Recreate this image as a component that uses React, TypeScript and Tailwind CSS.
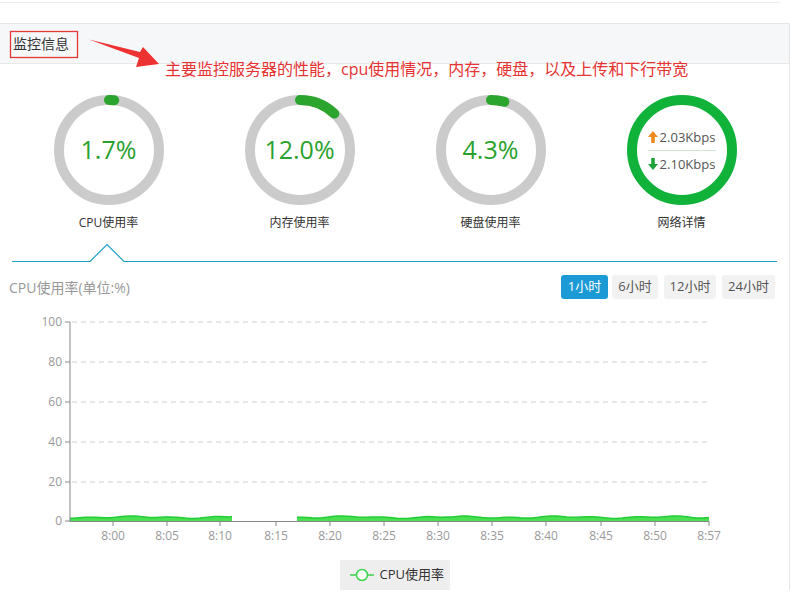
import React from "react";

const FONT = "'Open Sans','Noto Sans CJK SC',sans-serif";

function Gauge({ pct, label }: { pct: number; label: string }) {
  const c = 2 * Math.PI * 50;
  const len = (pct / 100) * c;
  return (
    <div className="flex flex-col items-center">
      <div className="relative w-[110px] h-[110px]">
        <svg width="110" height="110" viewBox="0 0 110 110">
          <circle cx="55" cy="55" r="50" fill="none" stroke="#cbcbcb" strokeWidth="10" />
          <circle
            cx="55"
            cy="55"
            r="50"
            fill="none"
            stroke="#2ba52e"
            strokeWidth="10"
            strokeLinecap="round"
            strokeDasharray={`${len} ${c}`}
            transform="rotate(-90 55 55)"
          />
        </svg>
        <div className="absolute inset-0 flex items-center justify-center text-[25px] text-[#2aa12f]">
          {pct.toFixed(1)}%
        </div>
      </div>
      <div className="mt-[10px] text-[12px] leading-[16px] text-[#333]">{label}</div>
    </div>
  );
}

function NetGauge() {
  return (
    <div className="flex flex-col items-center">
      <div className="relative w-[110px] h-[110px]">
        <svg width="110" height="110" viewBox="0 0 110 110">
          <circle cx="55" cy="55" r="50" fill="none" stroke="#10b23a" strokeWidth="10" />
        </svg>
        <div className="absolute inset-0 flex flex-col items-center justify-center text-[13px] text-[#555]">
          <div className="flex items-center gap-[2px] leading-[18px]">
            <svg width="10" height="12" viewBox="0 0 10 12">
              <path d="M5 0 L10 6 L6.8 6 L6.8 12 L3.2 12 L3.2 6 L0 6 Z" fill="#f08a1c" />
            </svg>
            <span>2.03Kbps</span>
          </div>
          <div className="w-[68px] h-px bg-[#cfe6d4] my-[4px]" />
          <div className="flex items-center gap-[2px] leading-[18px]">
            <svg width="10" height="12" viewBox="0 0 10 12">
              <path d="M5 12 L10 6 L6.8 6 L6.8 0 L3.2 0 L3.2 6 L0 6 Z" fill="#1ea23a" />
            </svg>
            <span>2.10Kbps</span>
          </div>
        </div>
      </div>
      <div className="mt-[10px] text-[12px] leading-[16px] text-[#333]">网络详情</div>
    </div>
  );
}

const yTicks = [
  { v: 100, y: 322 },
  { v: 80, y: 362 },
  { v: 60, y: 402 },
  { v: 40, y: 442 },
  { v: 20, y: 482 },
  { v: 0, y: 521 },
];

const xTicks = [
  { t: "8:00", x: 113 },
  { t: "8:05", x: 167 },
  { t: "8:10", x: 220 },
  { t: "8:15", x: 276 },
  { t: "8:20", x: 330 },
  { t: "8:25", x: 384 },
  { t: "8:30", x: 438 },
  { t: "8:35", x: 492 },
  { t: "8:40", x: 546 },
  { t: "8:45", x: 601 },
  { t: "8:50", x: 655 },
  { t: "8:57", x: 709 },
];

function areaPath(x0: number, x1: number) {
  const pts: string[] = [];
  for (let x = x0; x <= x1; x += 5) {
    const v = 1.9 + 0.35 * Math.sin(x / 17) + 0.3 * Math.sin(x / 6.7 + 1);
    pts.push(`${x},${(521 - v * 2).toFixed(1)}`);
  }
  pts.push(`${x1},${(521 - (1.9 + 0.35 * Math.sin(x1 / 17)) * 2).toFixed(1)}`);
  return { line: "M" + pts.join(" L"), area: `M${x0},521 L` + pts.join(" L") + ` L${x1},521 Z` };
}

function Chart() {
  const a = areaPath(70, 232);
  const b = areaPath(297, 709);
  return (
    <svg width="790" height="245" viewBox="0 305 790 245" style={{ fontFamily: FONT }}>
      {yTicks.map((t) => (
        <g key={t.v}>
          {t.v !== 0 && (
            <line x1="72" x2="707" y1={t.y} y2={t.y} stroke="#cfcfcf" strokeDasharray="5 4" />
          )}
          <line x1="65" x2="70" y1={t.y} y2={t.y} stroke="#888" />
          <text x="62" y={t.y + 4} textAnchor="end" fontSize="12" fill="#999">
            {t.v}
          </text>
        </g>
      ))}
      {[a, b].map((p, i) => (
        <g key={i}>
          <path d={p.area} fill="#4ae052" />
          <path d={p.line} fill="none" stroke="#22cc34" strokeWidth="1.5" />
        </g>
      ))}
      <line x1="70" x2="70" y1="322" y2="521.5" stroke="#888" />
      <line x1="70" x2="709" y1="521.5" y2="521.5" stroke="#888" />
      {xTicks.map((t) => (
        <g key={t.t}>
          <line x1={t.x} x2={t.x} y1="521" y2="526" stroke="#888" />
          <text x={t.x} y="540" textAnchor="middle" fontSize="12" fill="#999">
            {t.t}
          </text>
        </g>
      ))}
    </svg>
  );
}

export default function App() {
  return (
    <div className="relative w-[793px] h-[593px] overflow-hidden bg-white font-['Open_Sans','Noto_Sans_CJK_SC',sans-serif]">
      <div className="h-[3px] w-[780px] border-b border-[#ececec]" />

      <div className="mt-[20px] w-[790px] border-t border-r border-[#e6e6e6]">
        {/* Header */}
        <div className="h-[40px] bg-[#f5f7f8] border-b border-[#e8e8e8] flex items-center pl-[13px] text-[14px] text-[#333]">
          监控信息
        </div>

        {/* Gauges */}
        <div className="grid grid-cols-4 w-[764px] ml-[13px] pt-[31px]">
          <Gauge pct={1.7} label="CPU使用率" />
          <Gauge pct={12.0} label="内存使用率" />
          <Gauge pct={4.3} label="硬盘使用率" />
          <NetGauge />
        </div>

        {/* Tab divider with notch */}
        <svg width="790" height="20" viewBox="0 243 790 20" className="mt-[12px] block">
          <polyline
            points="12,261.5 90,261.5 107,244.5 124,261.5 777,261.5"
            fill="none"
            stroke="#1fa0c8"
            strokeWidth="1.2"
          />
        </svg>

        {/* Title row */}
        <div className="mt-[12px] flex items-center justify-between pl-[9px] pr-[14px]">
          <div className="text-[14px] text-[#999]">CPU使用率(单位:%)</div>
          <div className="flex items-center text-[13px]">
            <button className="h-[24px] w-[47px] rounded-[3px] bg-[#1c9ad6] text-white">1小时</button>
            <button className="ml-[4px] h-[24px] w-[46px] rounded-[3px] bg-[#f2f2f2] text-[#555]">6小时</button>
            <button className="ml-[6px] h-[24px] w-[52px] rounded-[3px] bg-[#f2f2f2] text-[#555]">12小时</button>
            <button className="ml-[6px] h-[24px] w-[53px] rounded-[3px] bg-[#f2f2f2] text-[#555]">24小时</button>
          </div>
        </div>

        {/* Chart */}
        <div className="mt-[6px]">
          <Chart />
        </div>

        {/* Legend */}
        <div className="mt-[10px] flex justify-center">
          <div className="h-[30px] w-[110px] bg-[#eeeeee] flex items-center pl-[10px] gap-[6px] text-[13px] text-[#333]">
            <svg width="24" height="14" viewBox="0 0 24 14">
              <line x1="0" x2="24" y1="7" y2="7" stroke="#3cd34a" strokeWidth="1.5" />
              <circle cx="12" cy="7" r="5.5" fill="#fff" stroke="#3cd34a" strokeWidth="1.5" />
            </svg>
            <span>CPU使用率</span>
          </div>
        </div>
      </div>

      {/* Annotation overlay: red box + arrow */}
      <svg className="absolute left-0 top-0" width="180" height="80" viewBox="0 0 180 80">
        <rect x="10.5" y="31.5" width="67" height="26" fill="none" stroke="#e53935" strokeWidth="1.3" />
        <path d="M89 39.5 L140 52 L143 47 L159 64 L136 67 L139 58 Z" fill="#ee3131" />
      </svg>
      <div className="absolute left-[165px] top-[58px] text-[16px] leading-[22px] text-[#e53333]">
        主要监控服务器的性能，cpu使用情况，内存，硬盘，以及上传和下行带宽
      </div>
    </div>
  );
}
